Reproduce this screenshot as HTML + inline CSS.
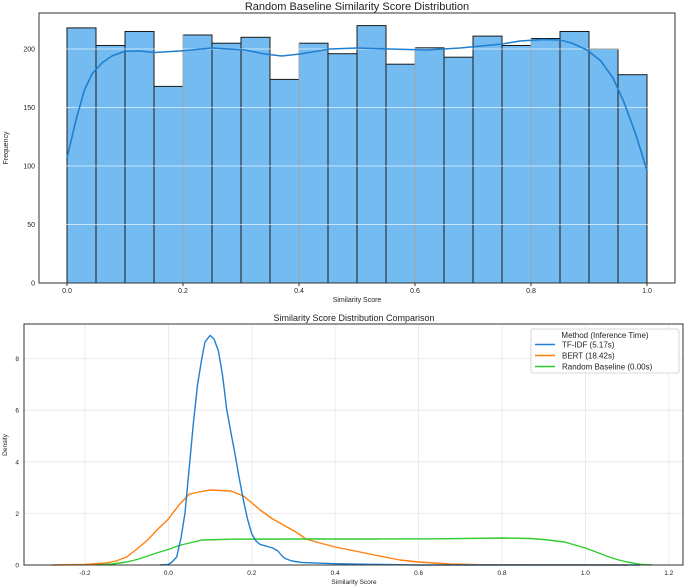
<!DOCTYPE html>
<html><head><meta charset="utf-8"><style>body{margin:0;background:#fff}svg{display:block}text{font-family:"Liberation Sans",sans-serif;fill:#222}</style></head><body>
<svg width="685" height="586" viewBox="0 0 685 586" xmlns="http://www.w3.org/2000/svg">
<rect width="685" height="586" fill="#fff"/>
<text x="357" y="10" font-size="11" text-anchor="middle">Random Baseline Similarity Score Distribution</text>
<g id="bars" fill="#74bbf1" stroke="#1a1a1a" stroke-width="1">
<rect x="67" y="27.9" width="29" height="255.1"/>
<rect x="96" y="45.5" width="29" height="237.5"/>
<rect x="125" y="31.5" width="29" height="251.5"/>
<rect x="154" y="86.4" width="29" height="196.6"/>
<rect x="183" y="35" width="29" height="248"/>
<rect x="212" y="43.2" width="29" height="239.8"/>
<rect x="241" y="37.3" width="29" height="245.7"/>
<rect x="270" y="79.4" width="29" height="203.6"/>
<rect x="299" y="43.2" width="29" height="239.8"/>
<rect x="328" y="53.7" width="29" height="229.3"/>
<rect x="357" y="25.6" width="29" height="257.4"/>
<rect x="386" y="64.2" width="29" height="218.8"/>
<rect x="415" y="47.8" width="29" height="235.2"/>
<rect x="444" y="57.2" width="29" height="225.8"/>
<rect x="473" y="36.1" width="29" height="246.9"/>
<rect x="502" y="45.5" width="29" height="237.5"/>
<rect x="531" y="38.5" width="29" height="244.5"/>
<rect x="560" y="31.5" width="29" height="251.5"/>
<rect x="589" y="49" width="29" height="234"/>
<rect x="618" y="74.7" width="29" height="208.3"/>
</g>
<g stroke="#ffffff" stroke-opacity="0.6" stroke-width="1">
<line x1="39" x2="675" y1="49" y2="49"/><line x1="39" x2="675" y1="107.5" y2="107.5"/><line x1="39" x2="675" y1="166" y2="166"/><line x1="39" x2="675" y1="224.5" y2="224.5"/>
<line x1="183" x2="183" y1="13" y2="283"/><line x1="299" x2="299" y1="13" y2="283"/><line x1="415" x2="415" y1="13" y2="283"/><line x1="531" x2="531" y1="13" y2="283"/>
</g>
<polyline fill="none" stroke="#1f7fd0" stroke-width="1.6" stroke-linejoin="round" points="67,158 76,120 84.4,90 92,74 101.8,63 112,56 125,51.3 140,51 154,52.5 180,51 212,48 245,50 265,54 281.6,56 300,54 330,49 357,48 390,49 426.6,50 460,48 502,44 520,41 542.6,39.6 560,40 571.6,43 587,50 600.6,60.7 613,78 623.8,101.7 636,135 647,170.7"/>
<rect x="39" y="13" width="636" height="270" fill="none" stroke="#333" stroke-width="1"/>
<g font-size="7" text-anchor="middle">
<text x="67" y="293">0.0</text><text x="183" y="293">0.2</text><text x="299" y="293">0.4</text><text x="415" y="293">0.6</text><text x="531" y="293">0.8</text><text x="647" y="293">1.0</text>
</g>
<g font-size="7" text-anchor="end">
<text x="35" y="285.5">0</text><text x="35" y="227">50</text><text x="35" y="168.5">100</text><text x="35" y="110">150</text><text x="35" y="51.5">200</text>
</g>
<g stroke="#333"><line x1="67" x2="67" y1="283" y2="286"/><line x1="183" x2="183" y1="283" y2="286"/><line x1="299" x2="299" y1="283" y2="286"/><line x1="415" x2="415" y1="283" y2="286"/><line x1="531" x2="531" y1="283" y2="286"/><line x1="647" x2="647" y1="283" y2="286"/></g>
<text x="357" y="302" font-size="7" text-anchor="middle">Similarity Score</text>
<text transform="translate(8,148) rotate(-90)" font-size="7" text-anchor="middle">Frequency</text>

<text x="354" y="321" font-size="9" text-anchor="middle">Similarity Score Distribution Comparison</text>
<g stroke="#e8e8e8" stroke-width="0.8">
<line x1="85" x2="85" y1="324" y2="565"/><line x1="168.4" x2="168.4" y1="324" y2="565"/><line x1="251.8" x2="251.8" y1="324" y2="565"/><line x1="335.2" x2="335.2" y1="324" y2="565"/><line x1="418.6" x2="418.6" y1="324" y2="565"/><line x1="502" x2="502" y1="324" y2="565"/><line x1="585.4" x2="585.4" y1="324" y2="565"/><line x1="668.8" x2="668.8" y1="324" y2="565"/>
<line x1="24" x2="683" y1="513.4" y2="513.4"/><line x1="24" x2="683" y1="461.8" y2="461.8"/><line x1="24" x2="683" y1="410.2" y2="410.2"/><line x1="24" x2="683" y1="358.6" y2="358.6"/>
</g>
<polyline fill="none" stroke="#ff7f0e" stroke-width="1.4" stroke-linejoin="round" points="51.6,565 85,564.5 105.9,563 116,561 126.7,557 137,549 147.6,540 158,529 168.4,519 179,505 189.3,494 201.8,491.5 210.1,490 231,491 243.5,496 252,503 260.1,510 272.7,519 285.2,526 296,532 306,539 320,543 335.2,547 355,551 376.9,555.5 400,560 418.6,562 450,564 481,564.7 627,565"/>
<polyline fill="none" stroke="#2ecc2e" stroke-width="1.4" stroke-linejoin="round" points="97.5,565 112,564 126.7,562 137,559.5 147.6,556 158,552.5 168.4,549.5 179,545.5 189.3,543 201.8,540 231,539.2 300,539 376.9,539 440,538.8 502,538 530,538.5 543.7,539.5 564.6,542 575,545 585.4,548 596,552 606.3,556 617,559.5 627,562 640,564.3 652,565"/>
<polyline fill="none" stroke="#1f7fd0" stroke-width="1.4" stroke-linejoin="round" points="160,565 168.4,564.5 172,562 176.7,557 181,538 185,513 189,470 193.4,423 197.5,385 201.8,358.6 205,342 210.1,335.4 214,339 218.4,350.9 222.5,375 226.8,410 231,433 235,454 239,477 243.5,500.5 247.5,519 251.8,534 256,541 260,544.4 266,546 272.7,548 278,551 282,556 285,558.5 292,561 301.8,562.4 320,563.2 335.2,563.7 370,564.3 418.6,565 640,565"/>
<rect x="24" y="324" width="659" height="241" fill="none" stroke="#333" stroke-width="1"/>
<g font-size="6.5" text-anchor="middle">
<text x="85" y="575">-0.2</text><text x="168.4" y="575">0.0</text><text x="251.8" y="575">0.2</text><text x="335.2" y="575">0.4</text><text x="418.6" y="575">0.6</text><text x="502" y="575">0.8</text><text x="585.4" y="575">1.0</text><text x="668.8" y="575">1.2</text>
</g>
<g font-size="6.5" text-anchor="end">
<text x="19" y="567.5">0</text><text x="19" y="516">2</text><text x="19" y="464.3">4</text><text x="19" y="412.7">6</text><text x="19" y="361">8</text>
</g>
<text x="354" y="584" font-size="6.5" text-anchor="middle">Similarity Score</text>
<text transform="translate(7,445) rotate(-90)" font-size="6.5" text-anchor="middle">Density</text>
<rect x="531" y="329" width="148" height="44" fill="#fff" fill-opacity="0.9" stroke="#ccc" stroke-width="0.8" rx="2"/>
<text x="605" y="338" font-size="8" text-anchor="middle">Method (Inference Time)</text>
<line x1="535" x2="555" y1="344.5" y2="344.5" stroke="#1f7fd0" stroke-width="1.4"/>
<text x="562" y="347.5" font-size="8">TF-IDF (5.17s)</text>
<line x1="535" x2="555" y1="355.5" y2="355.5" stroke="#ff7f0e" stroke-width="1.4"/>
<text x="562" y="358.5" font-size="8">BERT (18.42s)</text>
<line x1="535" x2="555" y1="366.5" y2="366.5" stroke="#2ecc2e" stroke-width="1.4"/>
<text x="562" y="369.5" font-size="8">Random Baseline (0.00s)</text>
</svg>
</body></html>
